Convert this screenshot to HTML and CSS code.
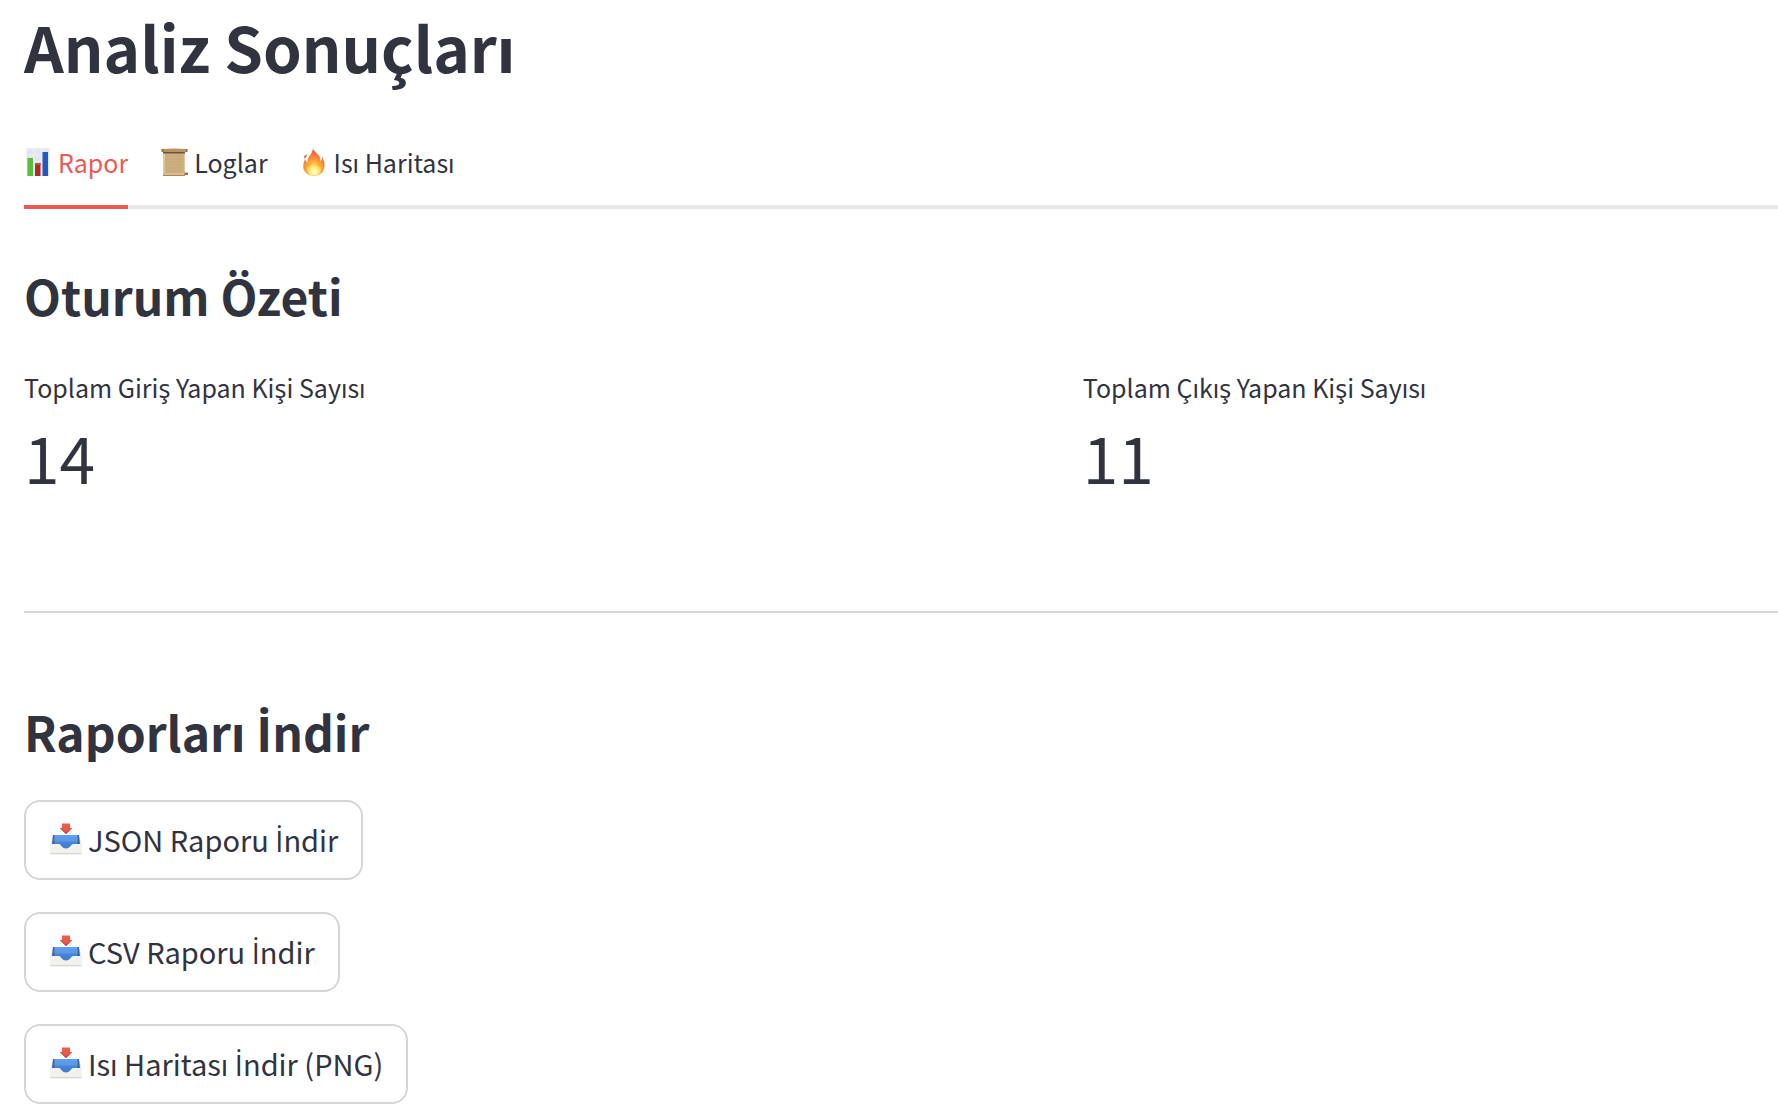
FILE: index.html
```html
<!DOCTYPE html>
<html lang="tr">
<head>
<meta charset="utf-8">
<meta name="viewport" content="width=device-width, initial-scale=1">
<title>Analiz Sonuçları</title>
<link rel="stylesheet" href="styles.css">
</head>
<body>
<svg class="defs" aria-hidden="true">
  <defs>
    <linearGradient id="tray-blue" x1="0" y1="0" x2="0" y2="1">
      <stop offset="0" stop-color="#62a2ee"/><stop offset="0.45" stop-color="#5796e4"/><stop offset="0.5" stop-color="#4785d5"/><stop offset="1" stop-color="#3e7cc9"/>
    </linearGradient>
    <linearGradient id="tray-side" x1="0" y1="0" x2="1" y2="0">
      <stop offset="0" stop-color="#17416f"/><stop offset="0.12" stop-color="#17416f" stop-opacity="0"/><stop offset="0.88" stop-color="#17416f" stop-opacity="0"/><stop offset="1" stop-color="#17416f"/>
    </linearGradient>
    <symbol id="inbox" viewBox="0 0 32 32">
      <path d="M3 12h26l2.500 9v9.500q0 1-1 1h-29q-1 0-1-1V21z" fill="#e4e3df"/>
      <path d="M3 12h26l1 14H2z" fill="url(#tray-blue)"/>
      <path d="M3 12h26l1 14H2z" fill="url(#tray-side)"/>
      <path d="M.5 21H9c2 0 2.500 4.500 7 4.500S21 21 23 21h8.500v9q0 1-1 1h-29q-1 0-1-1z" fill="#f2f1ee"/>
      <path d="M.5 30.500h31" stroke="#d6d5d0" stroke-width="1"/>
      <path d="M12 .5h8v4.500h2.500L16 11 9.500 5H12z" fill="#e85c4e"/>
      <path d="M9.500 5 16 11l6.500-6-6.500 4z" fill="#d24538"/>
    </symbol>
  </defs>
</svg>
<main class="page">
  <h1 class="title">Analiz Sonuçları</h1>

  <div class="tabs" role="tablist">
    <button class="tab tab-active" type="button" role="tab" aria-selected="true">
      <svg class="tab-icon" viewBox="0 0 28 28" aria-hidden="true">
        <path d="M2.500 0h23v28h-23z" fill="#dfe6ef"/>
        <path d="M2.500 1h23M2.500 7h23M2.500 13h23M2.500 20h23M10 0v28M18 0v28" stroke="#edf1f6" stroke-width="1"/>
        <path d="M3.500 10h5.500v18H3.500z" fill="#58bd3b"/>
        <path d="M11 15h5.500v13H11z" fill="#b52a20"/>
        <path d="M11 15h5.500v2H11z" fill="#cf4a3c"/>
        <path d="M18.500 4H24v24h-5.500z" fill="#2457bd"/>
      </svg>
      <span>Rapor</span>
    </button>
    <button class="tab" type="button" role="tab" aria-selected="false">
      <svg class="tab-icon" viewBox="0 0 28 28" aria-hidden="true">
        <path d="M3 4h22v22l1 1H3z" fill="#cfb083"/>
        <path d="M6 8h17M5 11h18M6 14h16M5 17h18M6 20h16M6 23h17" stroke="#c4a577" stroke-width="1"/>
        <path d="M3 4h2v22H3zM24 4h1v21h-1z" fill="#dfc59c"/>
        <path d="M2 1q13-1 25 0v3H2z" fill="#b99462"/>
        <path d="M3 4h22v1.500H3z" fill="#6f5433"/>
        <path d="M1.500 1h2v3h-2zM26 1h1.500v3H26z" fill="#8d6a3e"/>
        <path d="M3 25h22v2.500H3z" fill="#d9bd90"/>
        <path d="M24.500 24.500H28V27h-3.500z" fill="#9b7748"/>
        <path d="M3 27.500h22" stroke="#a98758" stroke-width="1"/>
      </svg>
      <span>Loglar</span>
    </button>
    <button class="tab" type="button" role="tab" aria-selected="false">
      <svg class="tab-icon" viewBox="0 0 28 28" aria-hidden="true">
        <defs>
          <radialGradient id="flame" cx="0.5" cy="0.85" r="0.8">
            <stop offset="0" stop-color="#ffe55c"/><stop offset="0.4" stop-color="#fcb23c"/><stop offset="0.75" stop-color="#f47a37"/><stop offset="1" stop-color="#e9502f"/>
          </radialGradient>
          <radialGradient id="core" cx="0.5" cy="0.8" r="0.65">
            <stop offset="0" stop-color="#fffde0"/><stop offset="0.5" stop-color="#ffee72"/><stop offset="1" stop-color="#fdbb3e"/>
          </radialGradient>
        </defs>
        <path d="M13 0c0 4 8 6 7.500 13 1.500-.8 1.800-3 1.300-4.500 2.200 3 3 6.500 2.700 10-.5 6-5 9.500-10.500 9.500S3.500 24.500 3.300 19C3.200 16 4 13 5.500 10.500c.2 2 .5 3.500 2 4 0-5.500 2.500-6.500 4-9.500.8-1.600 1.300-3 1.500-5z" fill="url(#flame)"/>
        <path d="M14 12c.5 3 4 4 4.500 7.500 1-.3 1.500-1.200 1.500-2 1.300 3 1.200 5.300 0 7-3 3.800-9 3.800-12 0-1.300-2.300-1-5 .5-7 .3 1 .8 1.500 1.500 2 0-3.500 3.500-4.500 4-7.500z" fill="url(#core)"/>
        <path d="M6.800 6.500c-2 .2-3.300 1.800-2.800 4C5.500 10 6.800 9 6.800 6.500z" fill="#ee6840"/>
      </svg>
      <span>Isı Haritası</span>
    </button>
  </div>

  <section class="summary">
    <h2 class="heading">Oturum Özeti</h2>
    <dl class="metrics">
      <div class="metric">
        <dt class="metric-label">Toplam Giriş Yapan Kişi Sayısı</dt>
        <dd class="metric-value">14</dd>
      </div>
      <div class="metric">
        <dt class="metric-label">Toplam Çıkış Yapan Kişi Sayısı</dt>
        <dd class="metric-value">11</dd>
      </div>
    </dl>
  </section>

  <hr class="divider">

  <section class="downloads">
    <h2 class="heading">Raporları <span class="dotted-cap">İ</span>ndir</h2>
    <div class="actions">
      <button class="action" type="button"><svg class="action-icon" aria-hidden="true"><use href="#inbox"/></svg><span>JSON Raporu <span class="dotted-cap">İ</span>ndir</span></button>
      <button class="action" type="button"><svg class="action-icon" aria-hidden="true"><use href="#inbox"/></svg><span>CSV Raporu <span class="dotted-cap">İ</span>ndir</span></button>
      <button class="action" type="button"><svg class="action-icon" aria-hidden="true"><use href="#inbox"/></svg><span>Isı Haritası <span class="dotted-cap">İ</span>ndir (PNG)</span></button>
    </div>
  </section>
</main>
</body>
</html>
```
FILE: styles.css
```css
* {
  box-sizing: border-box;
}

body {
  margin: 0;
  background: #fff;
  color: #31333f;
  font-family: "Source Sans Pro", "Noto Sans CJK SC", "Noto Sans", sans-serif;
}

.defs {
  display: block;
  width: 0;
  height: 0;
}

/* The CJK family has no precomposed dotted capital I. */
.dotted-cap {
  font-family: "Source Sans Pro", "Open Sans", sans-serif;
  line-height: 1;
}

.page {
  padding: 4px 0 14px 24px;
}

.title {
  margin: 0;
  font-size: 62px;
  line-height: 84px;
  font-weight: 700;
}

.tabs {
  display: flex;
  gap: 32px;
  margin-top: 33px;
  border-bottom: 4px solid #e8e8e9;
}

.tab {
  display: flex;
  align-items: center;
  gap: 6px;
  height: 88px;
  margin-bottom: -4px;
  padding: 0 0 2px;
  border: 0;
  border-bottom: 4px solid transparent;
  background: none;
  color: inherit;
  font: inherit;
  font-size: 25px;
  line-height: 40px;
}

.tab-active {
  border-bottom-color: #ec5953;
  color: #ec5953;
}

.tab-icon {
  width: 28px;
  height: 28px;
}

.heading {
  margin: 0;
  font-size: 48px;
  line-height: 68px;
  font-weight: 700;
}

.summary {
  padding-top: 52px;
}

.metrics {
  display: grid;
  grid-template-columns: 3fr 2fr;
  gap: 16px;
  margin: 38px 0 0;
}

.metric-label {
  font-size: 25px;
  line-height: 40px;
}

.metric-value {
  margin: 0;
  font-size: 64px;
  line-height: 98px;
}

.divider {
  height: 2px;
  margin: 106px 0 84px;
  border: 0;
  background: #d6d6d8;
}

.actions {
  display: flex;
  flex-direction: column;
  align-items: flex-start;
  gap: 32px;
  margin-top: 35px;
}

.action {
  display: flex;
  align-items: center;
  gap: 6px;
  height: 80px;
  padding: 0 23px 3px 24px;
  border: 2px solid #d6d6d8;
  border-radius: 16px;
  background: #fff;
  color: inherit;
  font: inherit;
  font-size: 29px;
  line-height: 40px;
}

.action-icon {
  width: 32px;
  height: 32px;
}
```
